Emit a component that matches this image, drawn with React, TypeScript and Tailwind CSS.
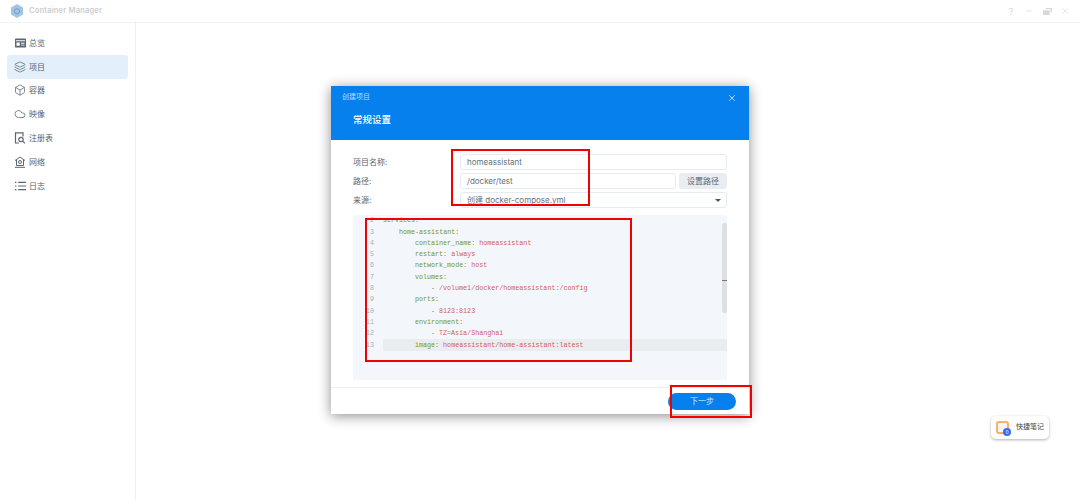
import React from 'react';
import { Layers, Box, Cloud, X, Minus } from 'lucide-react';

const cjk = "font-['Inter','Noto_Sans_CJK_SC',sans-serif]";

const OverviewIcon = () => (
  <svg viewBox="0 0 12 10" className="h-[10px] w-[11px] text-[#5b6670]">
    <path fill="currentColor" fillRule="evenodd" d="M1 0h10a1 1 0 0 1 1 1v8a1 1 0 0 1-1 1H1a1 1 0 0 1-1-1V1a1 1 0 0 1 1-1Zm0 2v1.2h10V2H1Zm.6 2.4V8h3.6V4.400H1.600Zm5 .4v.9h3.800v-.9H6.600Zm0 2v.9h3.800v-.9H6.600Z" />
  </svg>
);

const RegistryIcon = () => (
  <svg viewBox="0 0 12 12" fill="none" stroke="#5b6670" strokeWidth="1.2" className="h-[12px] w-[12px]">
    <path d="M5 11H1.500V.8h7.500v3.700" />
    <circle cx="7" cy="7.500" r="2.200" />
    <path d="m8.700 9.200 2.200 2.200" />
  </svg>
);

const NetworkIcon = () => (
  <svg viewBox="0 0 12 12" fill="none" stroke="#5b6670" strokeWidth="1" className="h-[12px] w-[12px]">
    <path d="M1 4.500 6 1l5 3.500M2.500 4v5.500h7V4" />
    <circle cx="6" cy="6" r="1.500" />
    <path d="M1 11.300h10" />
  </svg>
);

const LogIcon = () => (
  <svg viewBox="0 0 12 10" stroke="#5b6670" strokeWidth="1.2" className="h-[10px] w-[11px]">
    <path d="M0 1h1.500M0 5h1.500M0 9h1.500M3.500 1H12M3.500 5H12M3.500 9H12" />
  </svg>
);

const navItems: { label: string; icon: React.ReactNode; active?: boolean }[] = [
  { label: '总览', icon: <OverviewIcon /> },
  { label: '项目', icon: <Layers size={12} strokeWidth={1.5} />, active: true },
  { label: '容器', icon: <Box size={12} strokeWidth={1.5} /> },
  { label: '映像', icon: <Cloud size={12} strokeWidth={1.5} /> },
  { label: '注册表', icon: <RegistryIcon /> },
  { label: '网络', icon: <NetworkIcon /> },
  { label: '日志', icon: <LogIcon /> },
];

type Line = { no: number; indent: string; key?: string; val?: string; dash?: boolean };

const lines: Line[] = [
  { no: 2, indent: 'pl-0', key: 'services:' },
  { no: 3, indent: 'pl-[16px]', key: 'home-assistant:' },
  { no: 4, indent: 'pl-[32px]', key: 'container_name:', val: 'homeassistant' },
  { no: 5, indent: 'pl-[32px]', key: 'restart:', val: 'always' },
  { no: 6, indent: 'pl-[32px]', key: 'network_mode:', val: 'host' },
  { no: 7, indent: 'pl-[32px]', key: 'volumes:' },
  { no: 8, indent: 'pl-[48px]', dash: true, val: '/volume1/docker/homeassistant:/config' },
  { no: 9, indent: 'pl-[32px]', key: 'ports:' },
  { no: 10, indent: 'pl-[48px]', dash: true, val: '8123:8123' },
  { no: 11, indent: 'pl-[32px]', key: 'environment:' },
  { no: 12, indent: 'pl-[48px]', dash: true, val: 'TZ=Asia/Shanghai' },
  { no: 13, indent: 'pl-[32px]', key: 'image:', val: 'homeassistant/home-assistant:latest' },
];

const CodeEditor = () => (
  <div className="relative mt-[4px] h-[165px] overflow-hidden rounded-[2px] bg-[#f3f6fa] font-['Liberation_Mono',monospace] text-[6.7px]">
    {lines.map(line => (
      <div key={line.no} className="flex h-[11.3px] items-center leading-none">
        <span className="w-[22px] shrink-0 pr-[1px] text-right text-[#a9b0b8]">{line.no}</span>
        <span className={`ml-[8px] flex h-full flex-1 items-center ${line.indent} ${line.no === 13 ? 'bg-[#e9edf0]' : ''}`}>
          <span className="whitespace-pre">
            {line.dash && <span className="text-[#7a8a3a]">- </span>}
            {line.key && <span className="text-[#76981f]">{line.key}</span>}
            {line.key && line.val && ' '}
            {line.val && <span className="text-[#d4605a]">{line.val}</span>}
          </span>
        </span>
      </div>
    ))}
    <div className="absolute right-0 top-[8px] flex h-[90px] w-[5px] items-center justify-center rounded-[2px] bg-[#dde0e3]">
      <div className="mt-[25px] h-[1px] w-full bg-[#777]" />
    </div>
  </div>
);

const Field = ({ label, children }: { label: string; children: React.ReactNode }) => (
  <div className="flex h-[16px] items-center">
    <span className="w-[107px] shrink-0 text-[8px] text-[#5c6670]">{label}</span>
    {children}
  </div>
);

const inputClass =
  'flex h-full items-center rounded-[3px] border border-[#e6ebf1] bg-white pl-[6px] text-[8px] text-[#66707a]';

export default function App() {
  return (
    <div className={`relative flex h-[500px] w-[1080px] flex-col overflow-hidden bg-white ${cjk}`}>
      <header className="flex h-[23px] shrink-0 items-center border-b border-[#f0f1f3] pl-[11px] pr-[10px]">
        <svg viewBox="0 0 12 14" className="h-[14px] w-[12px]">
          <path fill="#a3c4e2" d="M6 0l6 3.5v7L6 14l-6-3.5v-7Z" />
          <path fill="none" stroke="#6f9cc4" strokeWidth="1" d="M3.500 6 6 4.500 8.500 6v2.500L6 10 3.500 8.500Z" />
        </svg>
        <span className="ml-[6px] text-[7.5px] font-semibold tracking-[0.2px] text-[#c9cdd3]">Container Manager</span>
        <div className="ml-auto flex items-center text-[#d5d8dc]">
          <span className="w-[10px] text-center text-[9px] leading-none">?</span>
          <Minus size={10} strokeWidth={1.5} className="ml-[8px]" />
          <svg viewBox="0 0 10 8" className="ml-[9px] h-[7px] w-[9px]" fill="currentColor">
            <path d="M3 0h7v5H8.500V1.500H3ZM0 2.500h7.500V8H0Z" />
          </svg>
          <X size={10} strokeWidth={1.5} className="ml-[8px]" />
        </div>
      </header>

      <div className="flex flex-1">
        <aside className="w-[136px] shrink-0 border-r border-[#eceef0] px-[7px] pt-[8px]">
          {navItems.map(item => (
            <div
              key={item.label}
              className={`flex h-[23.8px] items-center gap-[3px] rounded-[3px] pl-[7px] text-[8px] text-[#59636d] ${
                item.active ? 'bg-[#e3f0fc]' : ''
              }`}
            >
              <span className="flex w-[12px] justify-center text-[#5b6670]">{item.icon}</span>
              {item.label}
            </div>
          ))}
        </aside>
        <main className="flex-1 bg-white" />
      </div>

      {/* dialog window */}
      <div className="absolute left-[331px] top-[86px] flex h-[328px] w-[418px] flex-col bg-white shadow-[0_2px_12px_rgba(0,0,0,0.45)]">
        <div className="h-[54px] shrink-0 bg-[#0680ed] pl-[22px] pr-[12px] text-white">
          <div className="-ml-[11px] flex h-[23px] items-center justify-between">
            <span className="text-[7px] text-[#b9d9f8]">创建项目</span>
            <X size={10} strokeWidth={2} className="text-[#dcecfc]" />
          </div>
          <div className="mt-[4px] text-[9.5px] font-medium">常规设置</div>
        </div>

        <div className="flex flex-col gap-[3px] pl-[22px] pr-[22px] pt-[14px]">
          <Field label="项目名称:">
            <div className={`${inputClass} flex-1`}>homeassistant</div>
          </Field>
          <Field label="路径:">
            <div className={`${inputClass} flex-1`}>/docker/test</div>
            <div className="ml-[3px] flex h-full w-[48px] items-center justify-center rounded-[3px] bg-[#e9edf3] text-[8px] text-[#5c6670]">
              设置路径
            </div>
          </Field>
          <Field label="来源:">
            <div className={`${inputClass} flex-1 justify-between pr-[5px]`}>
              <span>创建 docker-compose.yml</span>
              <svg viewBox="0 0 6 3" className="h-[3px] w-[6px]">
                <path fill="#4b5560" d="M0 0h6L3 3Z" />
              </svg>
            </div>
          </Field>
          <CodeEditor />
        </div>

        <div className="mt-[7px] flex flex-1 items-center justify-end border-t border-[#eceef0] pr-[13px]">
          <button className="flex h-[17px] w-[68px] items-center justify-center rounded-full bg-[#0680ed] text-[8px] text-[#d5e8fb]">
            下一步
          </button>
        </div>
      </div>

      {/* red annotation boxes */}
      <div className="absolute left-[451px] top-[149px] h-[57px] w-[139px] border-2 border-[#f00000]" />
      <div className="absolute left-[365px] top-[218px] h-[144px] w-[267px] border-2 border-[#f00000]" />
      <div className="absolute left-[670px] top-[385px] h-[33px] w-[82px] border-2 border-[#f00000]" />

      {/* quick note widget */}
      <div className="absolute left-[991px] top-[416px] flex h-[23px] w-[58px] items-center rounded-[5px] bg-white pl-[5px] shadow-[0_1px_3px_rgba(0,0,0,0.3)]">
        <div className="relative h-[13px] w-[13px] rounded-[3px] border-[2px] border-[#f5b26b] bg-[#f4f4f4]">
          <div className="absolute -bottom-[4px] -right-[4px] flex h-[8px] w-[8px] items-center justify-center rounded-full bg-[#2f6bf0] text-[5px] leading-none text-white">
            0
          </div>
        </div>
        <span className="ml-[7px] text-[7px] text-[#444]">快捷笔记</span>
      </div>
    </div>
  );
}
